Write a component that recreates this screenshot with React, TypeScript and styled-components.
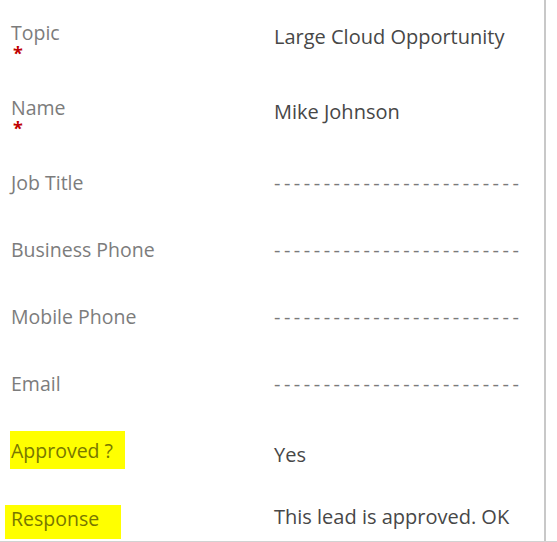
import React from 'react';
import styled, { createGlobalStyle } from 'styled-components';

const GlobalStyle = createGlobalStyle`
  html, body {
    margin: 0;
    padding: 0;
    background: #ffffff;
  }
  body {
    font-family: 'Open Sans', 'Noto Sans', Arial, sans-serif;
  }
`;

const Page = styled.div`
  width: 557px;
  height: 542px;
  border-bottom: 1px solid #d2d2d2;
  box-sizing: border-box;
  overflow: hidden;
`;

const Form = styled.div`
  width: 546px;
  height: 541px;
  border-right: 2px solid #c8c8c8;
  box-sizing: border-box;
  display: flex;
  flex-direction: column;
`;

const Row = styled.div<{ $h: number }>`
  height: ${(p) => p.$h}px;
  flex: none;
  display: grid;
  grid-template-columns: 263px 1fr;
  align-items: center;
  padding-left: 11px;
`;

const LabelBlock = styled.div<{ $req?: boolean }>`
  display: flex;
  flex-direction: column;
  align-items: flex-start;
  padding-top: ${(p) => (p.$req ? 4 : 0)}px;
`;

const Label = styled.span`
  font-size: 19.5px;
  line-height: 26px;
  color: #7c7c7c;
`;

const Required = styled.span`
  color: #c00000;
  font-size: 18px;
  font-weight: 700;
  line-height: 10px;
  height: 10px;
  margin-top: 2px;
  margin-left: 2px;
`;

const Highlight = styled.span<{ $l: number; $r: number; $t: number; $b: number; $shift: number }>`
  display: inline-block;
  background: #ffff00;
  color: #777700;
  font-size: 19.5px;
  line-height: 26px;
  margin-left: -${(p) => p.$l}px;
  margin-top: ${(p) => Math.max(p.$shift, 0)}px;
  margin-bottom: ${(p) => Math.max(-p.$shift, 0)}px;
  padding: ${(p) => p.$t}px ${(p) => p.$r}px ${(p) => p.$b}px ${(p) => p.$l}px;
`;

const Value = styled.span`
  font-size: 20px;
  line-height: 26px;
  color: #474747;
  white-space: nowrap;
`;

const Empty = styled.span`
  font-size: 20px;
  line-height: 26px;
  color: #7a7a7a;
  letter-spacing: 3.5px;
  white-space: nowrap;
`;

type Field = {
  label: string;
  value?: string;
  required?: boolean;
  h: number;
  mark?: { l: number; r: number; t: number; b: number; shift: number };
};

const fields: Field[] = [
  { label: 'Topic', value: 'Large Cloud Opportunity', required: true, h: 74 },
  { label: 'Name', value: 'Mike Johnson', required: true, h: 75 },
  { label: 'Job Title', h: 67 },
  { label: 'Business Phone', h: 67 },
  { label: 'Mobile Phone', h: 67 },
  { label: 'Email', h: 67 },
  { label: 'Approved ?', value: 'Yes', h: 75, mark: { l: 1, r: 12, t: 7, b: 5, shift: -9 } },
  { label: 'Response', value: 'This lead is approved. OK', h: 49, mark: { l: 6, r: 22, t: 1, b: 7, shift: 10 } },
];

const dashes = '-'.repeat(25);

export default function App() {
  return (
    <>
      <GlobalStyle />
      <Page>
        <Form>
          {fields.map((f) => (
            <Row key={f.label} $h={f.h}>
              <LabelBlock $req={f.required}>
                {f.mark ? (
                  <Highlight
                    $l={f.mark.l}
                    $r={f.mark.r}
                    $t={f.mark.t}
                    $b={f.mark.b}
                    $shift={f.mark.shift}
                  >
                    {f.label}
                  </Highlight>
                ) : (
                  <Label>{f.label}</Label>
                )}
                {f.required && <Required>*</Required>}
              </LabelBlock>
              {f.value ? <Value>{f.value}</Value> : <Empty>{dashes}</Empty>}
            </Row>
          ))}
        </Form>
      </Page>
    </>
  );
}
